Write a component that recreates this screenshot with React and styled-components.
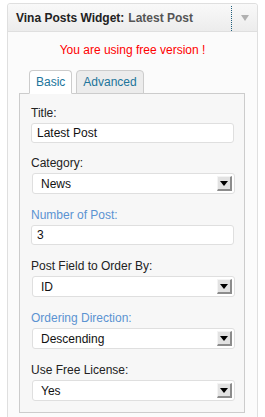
import React from 'react';
import styled, { createGlobalStyle } from 'styled-components';

const Global = createGlobalStyle`
  html, body {
    margin: 0;
    background: #ffffff;
  }
  body {
    font-family: "Liberation Sans", Arial, sans-serif;
    font-size: 12px;
    color: #222;
  }
`;

const Page = styled.div`
  padding: 3px 7px 0 7px;
  height: 414px;
  overflow: hidden;
`;

const Widget = styled.div`
  border: 1px solid #dfdfdf;
  border-radius: 3px;
  background: #fbfbfb;
  height: 430px;
`;

const Header = styled.div`
  display: flex;
  align-items: stretch;
  height: 27px;
  background: linear-gradient(#f9f9f9, #ececec);
  border-bottom: 1px solid #dfdfdf;
  border-radius: 3px 3px 0 0;
`;

const Title = styled.div`
  flex: 1;
  display: flex;
  align-items: center;
  padding-left: 8px;
  font-weight: bold;
  color: #222;
`;

const Sub = styled.span`
  color: #555;
  margin-left: 4px;
`;

const Toggle = styled.div`
  width: 25px;
  margin-top: 2px;
  border-left: 1px dotted #215f7e;
  display: flex;
  align-items: center;
  justify-content: center;
  &::after {
    content: "";
    border-left: 4px solid transparent;
    border-right: 4px solid transparent;
    border-top: 6px solid #b0b0b0;
    margin-top: -1px;
  }
`;

const Body = styled.div`
  padding: 10px 12px 0 11px;
`;

const Notice = styled.div`
  text-align: center;
  color: #ff0000;
  line-height: 16px;
  margin-left: 1px;
`;

const Tabs = styled.div`
  display: flex;
  gap: 4px;
  margin: 12px 0 0 10px;
  position: relative;
  z-index: 1;
`;

const Tab = styled.div`
  height: 22px;
  line-height: 22px;
  padding: 0 6px;
  border: 1px solid #cccccc;
  border-bottom-color: ${p => (p.$active ? '#ffffff' : '#cccccc')};
  border-radius: 4px 4px 0 0;
  background: ${p => (p.$active ? '#ffffff' : '#ececec')};
  color: #21759b;
  margin-bottom: -1px;
`;

const Panel = styled.div`
  border: 1px solid #cccccc;
  background: #f7f7f7;
  padding: 12px 10px 0 11px;
  height: 306px;
`;

const Field = styled.div`
  margin-bottom: 14px;
  &:first-child {
    margin-bottom: 13px;
  }
`;

const Label = styled.div`
  line-height: 15px;
  margin-bottom: 2px;
  color: ${p => (p.$hl ? '#5b93d2' : '#222')};
`;

const Input = styled.div`
  height: 18px;
  line-height: 18px;
  padding: 0 5px;
  background: #fff;
  border: 1px solid #dfdfdf;
  border-radius: 3px;
  color: #111;
`;

const Select = styled.div`
  display: flex;
  align-items: center;
  height: 19px;
  margin-left: 1px;
  margin-right: -1px;
  padding: 0 2px 0 8px;
  background: #fff;
  border: 1px solid #dfdfdf;
  border-radius: 3px;
  color: #111;
`;

const Value = styled.span`
  flex: 1;
`;

const Arrow = styled.span`
  width: 15px;
  height: 15px;
  box-sizing: border-box;
  background: #e2e2e2;
  border-right: 2px solid #8c8c8c;
  border-bottom: 2px solid #8c8c8c;
  border-top: 1px solid #f4f4f4;
  border-left: 1px solid #f4f4f4;
  display: flex;
  align-items: center;
  justify-content: center;
  &::after {
    content: "";
    border-left: 4px solid transparent;
    border-right: 4px solid transparent;
    border-top: 5px solid #000;
    margin-top: 1px;
  }
`;

const fields = [
  { label: 'Title:', value: 'Latest Post', type: 'input' },
  { label: 'Category:', value: 'News', type: 'select' },
  { label: 'Number of Post:', value: '3', type: 'input', hl: true },
  { label: 'Post Field to Order By:', value: 'ID', type: 'select' },
  { label: 'Ordering Direction:', value: 'Descending', type: 'select', hl: true },
  { label: 'Use Free License:', value: 'Yes', type: 'select' },
];

export default function App() {
  return (
    <Page>
      <Global />
      <Widget>
        <Header>
          <Title>
            Vina Posts Widget:<Sub>Latest Post</Sub>
          </Title>
          <Toggle />
        </Header>
        <Body>
          <Notice>You are using free version !</Notice>
          <Tabs>
            <Tab $active>Basic</Tab>
            <Tab>Advanced</Tab>
          </Tabs>
          <Panel>
            {fields.map(f => (
              <Field key={f.label}>
                <Label $hl={f.hl}>{f.label}</Label>
                {f.type === 'input' ? (
                  <Input>{f.value}</Input>
                ) : (
                  <Select>
                    <Value>{f.value}</Value>
                    <Arrow />
                  </Select>
                )}
              </Field>
            ))}
          </Panel>
        </Body>
      </Widget>
    </Page>
  );
}
